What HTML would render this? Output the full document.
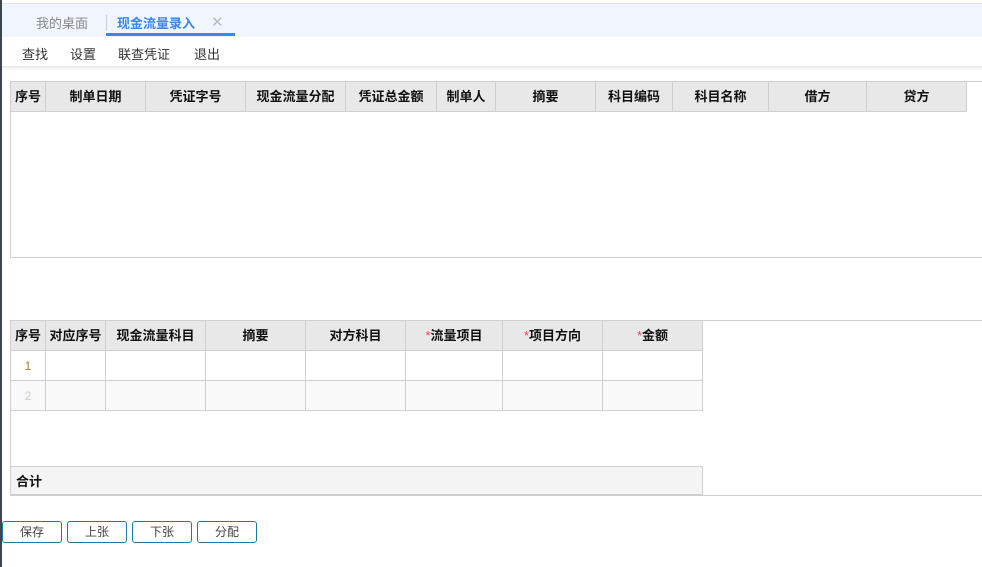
<!DOCTYPE html>
<html><head><meta charset="utf-8"><style>
*{margin:0;padding:0;box-sizing:border-box}
body{width:982px;height:567px;background:#fff;font-family:"Liberation Sans","Noto Sans CJK SC",sans-serif;font-size:13px;color:#333;position:relative;overflow:hidden}
.abs{position:absolute}
.lb{left:0;top:0;width:2px;height:567px;background:#3b4450}
.top{left:2px;top:3px;width:980px;height:34px;background:#f0f5fe;border-top:1px solid #dde3ea}
.tab{top:13px;font-size:13px}
.tool span{position:absolute;top:44px;font-size:13px;color:#333}
table{border-collapse:collapse;position:absolute;table-layout:fixed}
td,th{border:1px solid #cfcfcf;height:30px;font-size:13px;text-align:center}
th{background:#e8e8e8;font-weight:bold;color:#111;padding-bottom:2px}
.s{color:#f0405a;font-weight:normal}
.btn{position:absolute;top:521px;width:60px;height:22px;border:1px solid #1c7ba4;border-radius:3px;text-align:center;line-height:20px;font-size:12px;color:#444}
</style></head><body>
<div class="abs top"></div>
<div class="abs lb"></div>
<div class="abs tab" style="left:36px;color:#888">我的桌面</div>
<div class="abs" style="left:106px;top:15px;width:1px;height:16px;background:#ccd"></div>
<div class="abs tab" style="left:117px;color:#3a86ea;font-weight:bold">现金流量录入</div>
<div class="abs tab" style="left:211px;color:#bbb;font-size:15px;top:13px">✕</div>
<div class="abs" style="left:106px;top:33px;width:129px;height:3px;background:#3a86ea"></div>
<div class="tool"><span style="left:22px">查找</span><span style="left:70px">设置</span><span style="left:118px">联查凭证</span><span style="left:194px">退出</span></div>
<div class="abs" style="left:2px;top:66px;width:980px;height:4px;background:linear-gradient(#e6e6e6,#fff)"></div>

<div class="abs" style="left:10px;top:81px;width:973px;height:177px;border:1px solid #d0d0d0;border-right:none"></div>
<table style="left:10px;top:81px;width:956px">
<colgroup><col style="width:35px"><col style="width:100px"><col style="width:100px"><col style="width:100px"><col style="width:91px"><col style="width:59px"><col style="width:100px"><col style="width:77px"><col style="width:96px"><col style="width:98px"><col style="width:100px"></colgroup>
<tr><th>序号</th><th>制单日期</th><th>凭证字号</th><th>现金流量分配</th><th>凭证总金额</th><th>制单人</th><th>摘要</th><th>科目编码</th><th>科目名称</th><th>借方</th><th>贷方</th></tr>
</table>

<div class="abs" style="left:10px;top:320px;width:973px;height:176px;border:1px solid #d0d0d0;border-right:none"></div>
<table style="left:10px;top:320px;width:692px">
<colgroup><col style="width:35px"><col style="width:60px"><col style="width:100px"><col style="width:100px"><col style="width:100px"><col style="width:97px"><col style="width:100px"><col style="width:100px"></colgroup>
<tr><th>序号</th><th>对应序号</th><th>现金流量科目</th><th>摘要</th><th>对方科目</th><th><span class="s">*</span>流量项目</th><th><span class="s">*</span>项目方向</th><th><span class="s">*</span>金额</th></tr>
<tr><td style="color:#b07a20;font-size:12px">1</td><td></td><td></td><td></td><td></td><td></td><td></td><td></td></tr>
<tr style="background:#f9f9f9"><td style="color:#ccc;font-size:12px">2</td><td></td><td></td><td></td><td></td><td></td><td></td><td></td></tr>
</table>
<div class="abs" style="left:10px;top:466px;width:693px;height:30px;background:#f4f4f4;border:1px solid #cfcfcf;border-bottom:2px solid #cfcfcf;font-weight:bold;color:#111;padding:4px 0 0 5px">合计</div>

<div class="btn" style="left:2px">保存</div>
<div class="btn" style="left:67px">上张</div>
<div class="btn" style="left:132px">下张</div>
<div class="btn" style="left:197px">分配</div>
</body></html>
